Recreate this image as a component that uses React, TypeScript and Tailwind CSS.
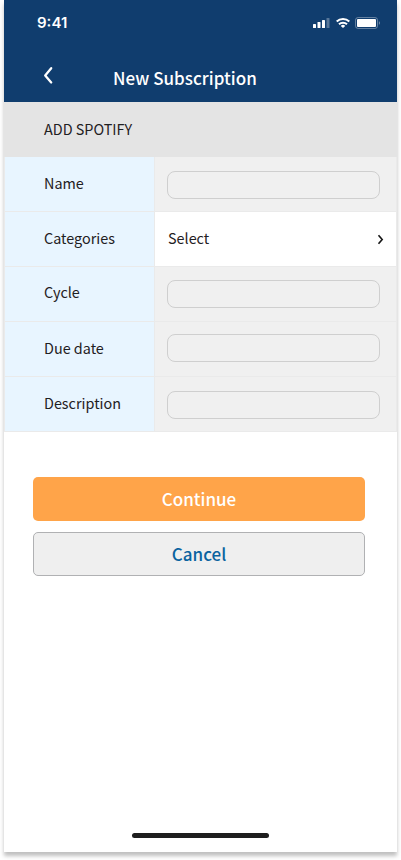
import React from "react";

type Row = { label: string; labelPad: string; inputPad: string; select?: boolean };

const rows: Row[] = [
  { label: "Name", labelPad: "pt-[14px]", inputPad: "pt-[14px]" },
  { label: "Categories", labelPad: "pt-[14px]", inputPad: "pt-[14px]", select: true },
  { label: "Cycle", labelPad: "pt-[13px]", inputPad: "pt-[13px]" },
  { label: "Due date", labelPad: "pt-[14px]", inputPad: "pt-[12px]" },
  { label: "Description", labelPad: "pt-[14px]", inputPad: "pt-[14px]" },
];

function StatusIcons() {
  return (
    <svg className="mt-[17px] h-[12px] w-[67px]" viewBox="0 0 67 12" fill="white">
      <rect x="0" y="7" width="3" height="4" rx="0.6" />
      <rect x="4.5" y="5" width="3" height="6" rx="0.6" />
      <rect x="9" y="3" width="3" height="8" rx="0.6" />
      <rect x="13.5" y="1" width="3" height="10" rx="0.6" opacity="0.3" />
      <g fill="none" stroke="white" strokeWidth="2">
        <path d="M23.700 4.500a9 9 0 0 1 12.600 0" />
        <path d="M26 7.300a5.700 5.700 0 0 1 8 0" />
      </g>
      <path d="M32.200 8.900a3.200 3.200 0 0 0-4.400 0L30 11.100z" />
      <rect x="42.5" y="0.5" width="22" height="11" rx="2.6" fill="none" stroke="white" opacity="0.35" />
      <path d="M65.900 4.200v3.600c.7-.3 1.100-1 1.100-1.800s-.4-1.500-1.100-1.800z" opacity="0.4" />
      <rect x="44" y="2" width="19" height="8" rx="1" />
    </svg>
  );
}

export default function App() {
  return (
    <div className="h-[860px] w-[401px] overflow-hidden bg-white pl-1 font-['Noto_Sans_CJK_SC','Noto_Sans',sans-serif] text-[#1f2022]">
      <div className="flex h-[852px] w-[393px] flex-col bg-white shadow-[0_4px_4px_rgba(0,0,0,0.25)]">
        <header className="h-[102px] shrink-0 bg-[#103d6e] text-white">
          <div className="flex h-[60px] justify-between pl-[33px] pr-[17px]">
            <span className="mt-[13px] font-['Inter',sans-serif] text-[15px] font-semibold leading-5">9:41</span>
            <StatusIcons />
          </div>
          <div className="flex h-[42px]">
            <button className="ml-[39px] mt-[6px] h-[19px] w-[11px]" aria-label="Back">
              <svg className="h-[19px] w-[11px]" viewBox="0 0 11 19" fill="none" stroke="white" strokeWidth="2.300" strokeLinecap="round" strokeLinejoin="round">
                <path d="M8.200 2.200 2.200 9.500l6 7" />
              </svg>
            </button>
            <h1 className="ml-[59px] mt-[6px] text-[17px] font-medium leading-6 tracking-[0.03px] whitespace-nowrap">New Subscription</h1>
          </div>
        </header>
        <section className="h-[55px] shrink-0 bg-[#e4e4e4] pl-10 pt-[15px]">
          <h2 className="text-[14.400px] leading-6">ADD SPOTIFY</h2>
        </section>
        <div className="shrink-0 border-x border-[#eaeaea] text-[14.400px] leading-6">
          {rows.map((r) => (
            <div key={r.label} className="flex h-[55px] border-b border-[#eaeaea]">
              <div className={`w-[150px] border-r border-[#eaeaea] bg-[#e8f5ff] pl-[39px] ${r.labelPad}`}>{r.label}</div>
              <div className={`flex flex-1 items-start justify-between ${r.select ? "bg-white" : "bg-[#f0f0f0]"} pl-3 ${r.inputPad}`}>
                {r.select ? (
                  <>
                    <span className="ml-px">Select</span>
                    <svg className="mr-[12px] mt-[8px] h-[11px] w-[7px]" viewBox="0 0 7 11" fill="none" stroke="#151515" strokeWidth="1.600">
                      <path d="M1.500 1.200 5.200 5.500 1.500 9.800" />
                    </svg>
                  </>
                ) : (
                  <input aria-label={r.label} className="h-7 w-[213px] rounded-lg border border-[#cfcfcf] bg-[#f0f0f0]" />
                )}
              </div>
            </div>
          ))}
        </div>
        <div className="mt-[45px] flex flex-col gap-[11px] pl-[29px] pr-8 text-[17px] font-medium leading-6">
          <button className="h-11 rounded-[5px] bg-[#ffa449] text-white">Continue</button>
          <button className="h-11 rounded-[5px] border border-[#b0b1b3] bg-[#efefef] text-[#0a63a0]">Cancel</button>
        </div>
        <div className="mb-[14px] ml-[128px] mt-auto h-[5px] w-[137px] rounded-full bg-[#1e1e1e]" />
      </div>
    </div>
  );
}
